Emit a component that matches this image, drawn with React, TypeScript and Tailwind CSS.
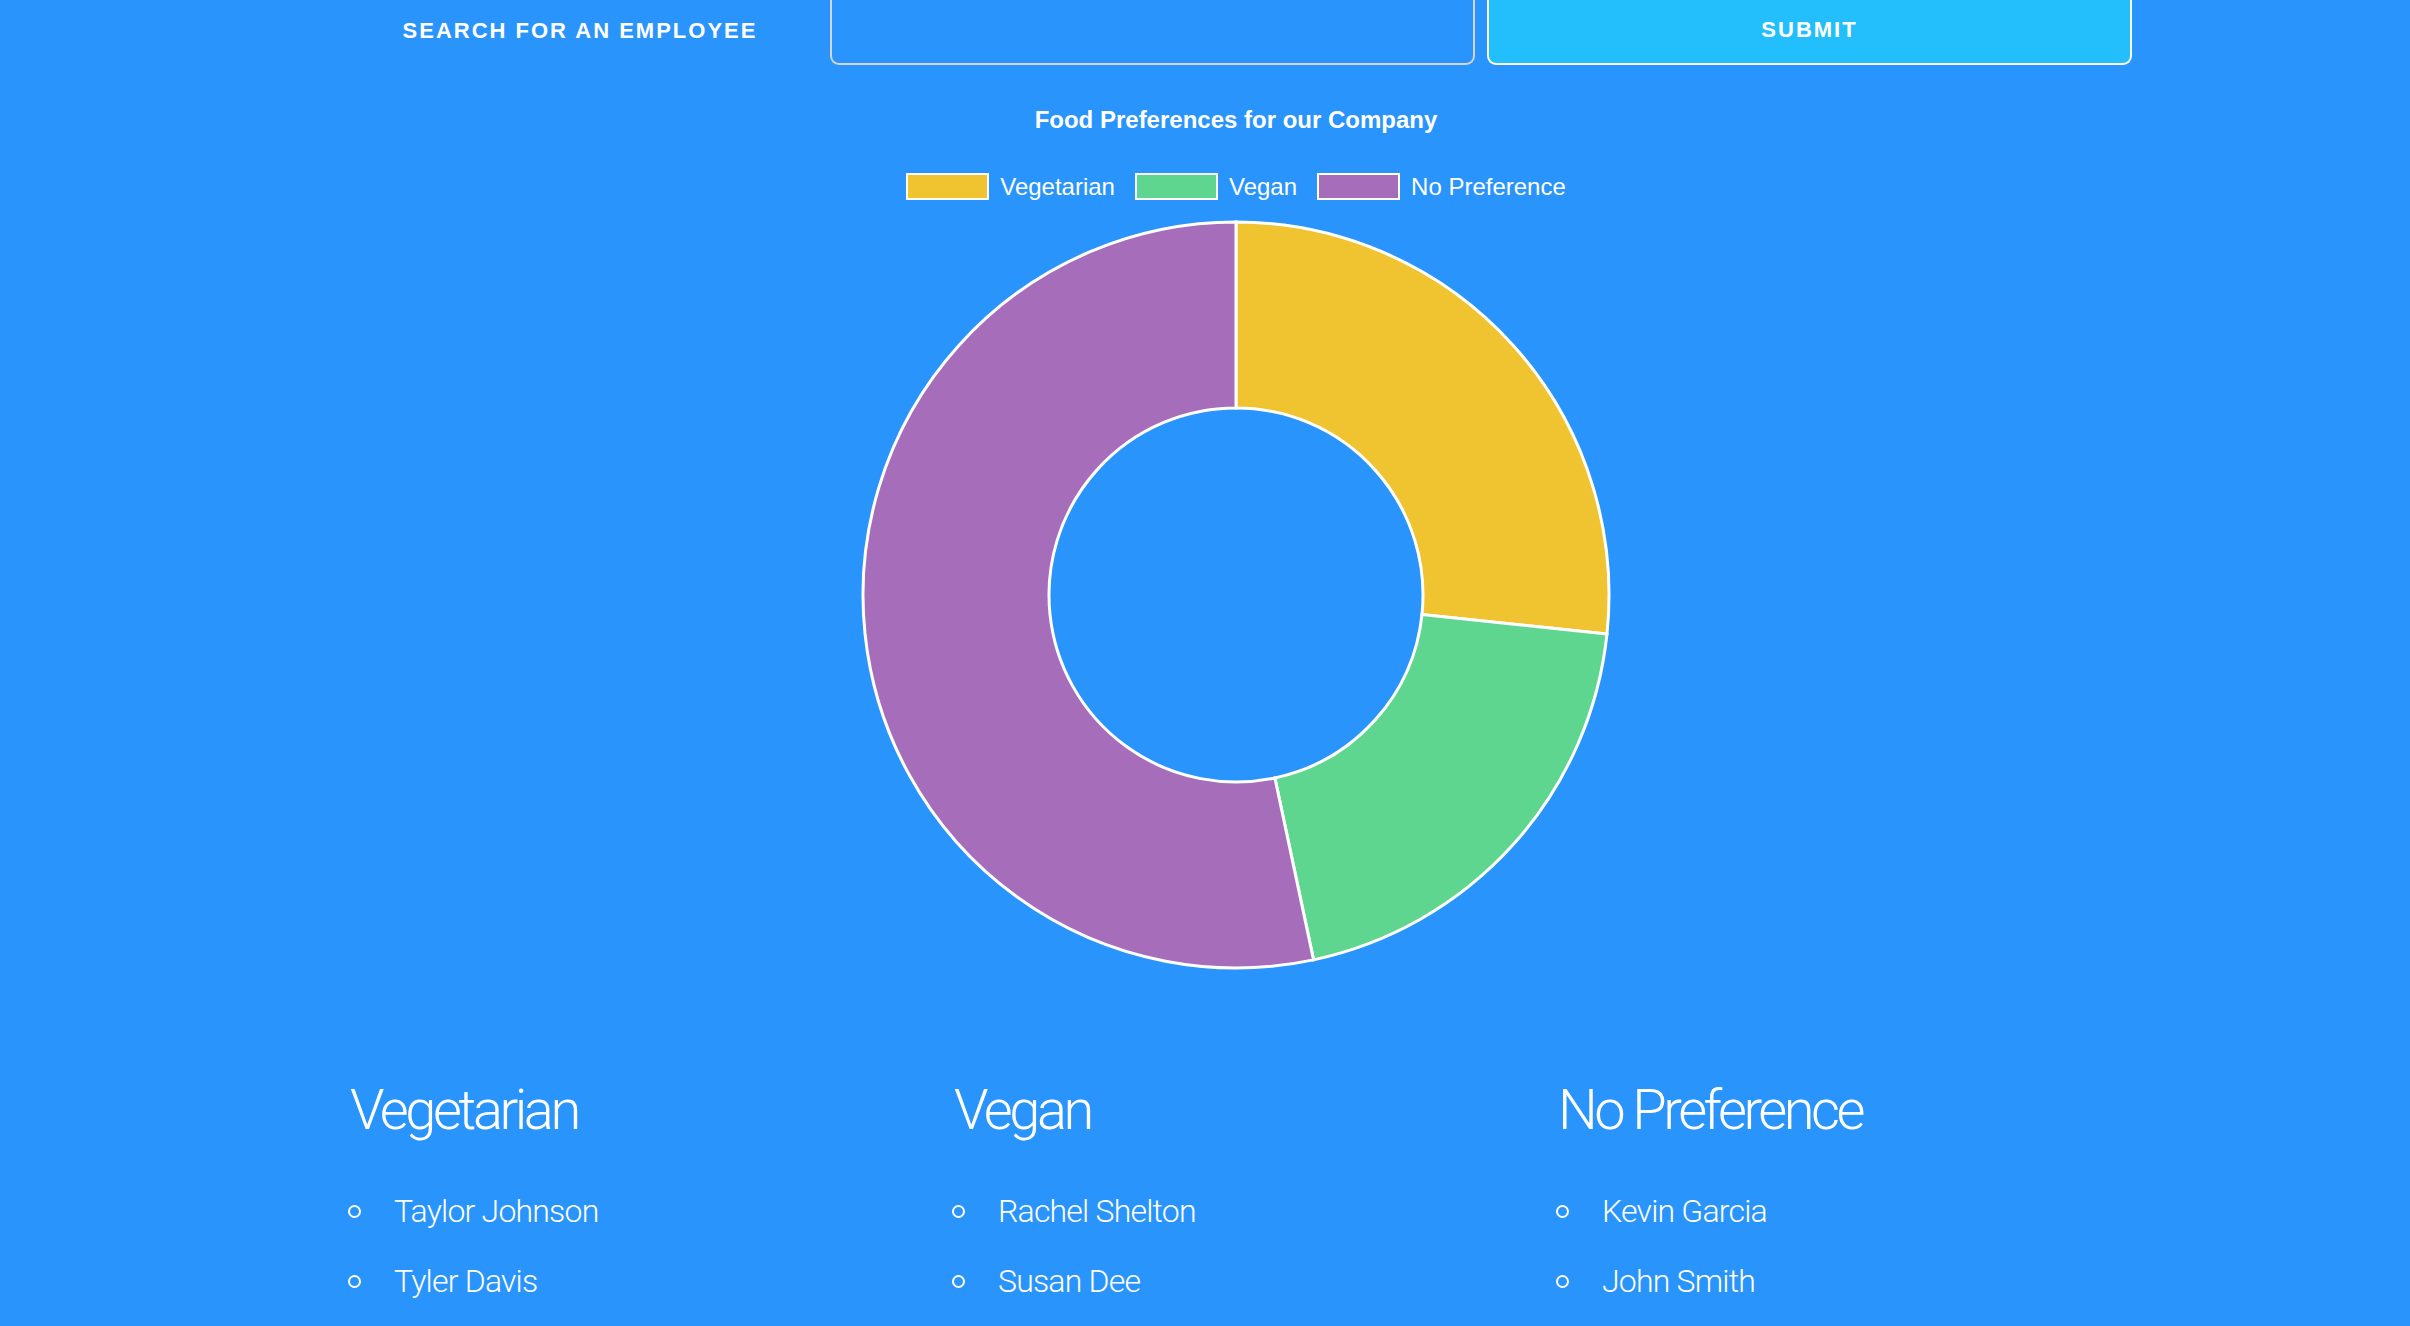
const slices = [
  { label: "Vegetarian", value: 4, color: "#f0c330", swatch: "bg-[#f0c330]" },
  { label: "Vegan", value: 3, color: "#5fd68f", swatch: "bg-[#5fd68f]" },
  { label: "No Preference", value: 8, color: "#a66eba", swatch: "bg-[#a66eba]" },
];

const groups = [
  { title: "Vegetarian", people: ["Taylor Johnson", "Tyler Davis"] },
  { title: "Vegan", people: ["Rachel Shelton", "Susan Dee"] },
  { title: "No Preference", people: ["Kevin Garcia", "John Smith"] },
];

// annular sector, angles in degrees clockwise from 12 o'clock
const sector = (cx: number, cy: number, r0: number, r1: number, a0: number, a1: number) => {
  const pt = (r: number, a: number) => {
    const t = (a * Math.PI) / 180;
    return `${cx + r * Math.sin(t)} ${cy - r * Math.cos(t)}`;
  };
  const big = a1 - a0 > 180 ? 1 : 0;
  return [
    `M ${pt(r1, a0)}`,
    `A ${r1} ${r1} 0 ${big} 1 ${pt(r1, a1)}`,
    `L ${pt(r0, a1)}`,
    `A ${r0} ${r0} 0 ${big} 0 ${pt(r0, a0)}`,
    "Z",
  ].join(" ");
};

const Donut = () => {
  const total = slices.reduce((s, x) => s + x.value, 0);
  let start = 0;
  return (
    <svg width="752" height="752" viewBox="0 0 752 752">
      {slices.map((s) => {
        const end = start + (s.value / total) * 360;
        const d = sector(376, 376, 187, 373, start, end);
        start = end;
        return <path key={s.label} d={d} fill={s.color} stroke="#ffffff" strokeWidth="3" />;
      })}
    </svg>
  );
};

const App = () => {
  return (
    <div className="min-h-[1326px] bg-[#2994fb] text-white overflow-hidden">
      <div className="w-[1812px] ml-[330px]">
        {/* search row */}
        <div className="flex h-[65px]">
          <div className="w-[500px] pb-[4px] flex items-center justify-center font-['Liberation_Sans',sans-serif] font-bold text-[22px] tracking-[2px] uppercase">
            Search for an employee
          </div>
          <div className="w-[645px] border-2 border-t-0 border-[#d4d4d4] rounded-b-[9px]" />
          <button className="w-[645px] ml-[12px] pb-[4px] bg-[#22bffc] border-2 border-t-0 border-white rounded-b-[9px] font-['Liberation_Sans',sans-serif] font-bold text-[22px] tracking-[2px] uppercase">
            Submit
          </button>
        </div>

        {/* chart */}
        <div className="flex flex-col items-center font-['Liberation_Sans',sans-serif]">
          <h2 className="mt-[43px] text-[24px] leading-none font-bold">Food Preferences for our Company</h2>
          <div className="mt-[41px] flex items-center">
            {slices.map((s, i) => (
              <div key={s.label} className={`flex items-center ${i > 0 ? "ml-[20px]" : ""}`}>
                <span className={`w-[83px] h-[27px] border-2 border-white ${s.swatch}`} />
                <span className="ml-[11px] text-[24px] leading-none">{s.label}</span>
              </div>
            ))}
          </div>
          <div className="mt-[19px]">
            <Donut />
          </div>
        </div>

        {/* lists */}
        <div className="grid grid-cols-3 mt-[111px] font-['Roboto',sans-serif] font-light">
          {groups.map((g) => (
            <div key={g.title} className="pl-[20px]">
              <h1 className="text-[56px] leading-none tracking-[-3.5px]">{g.title}</h1>
              <ul className="mt-[57px] flex flex-col gap-[38px]">
                {g.people.map((p) => (
                  <li key={p} className="flex items-center h-[32px] -ml-[2px]">
                    <span className="w-[13px] h-[13px] rounded-full border-2 border-white" />
                    <span className="ml-[33px] text-[32px] leading-none tracking-[-0.8px]">{p}</span>
                  </li>
                ))}
              </ul>
            </div>
          ))}
        </div>
      </div>
    </div>
  );
};

export default App;
